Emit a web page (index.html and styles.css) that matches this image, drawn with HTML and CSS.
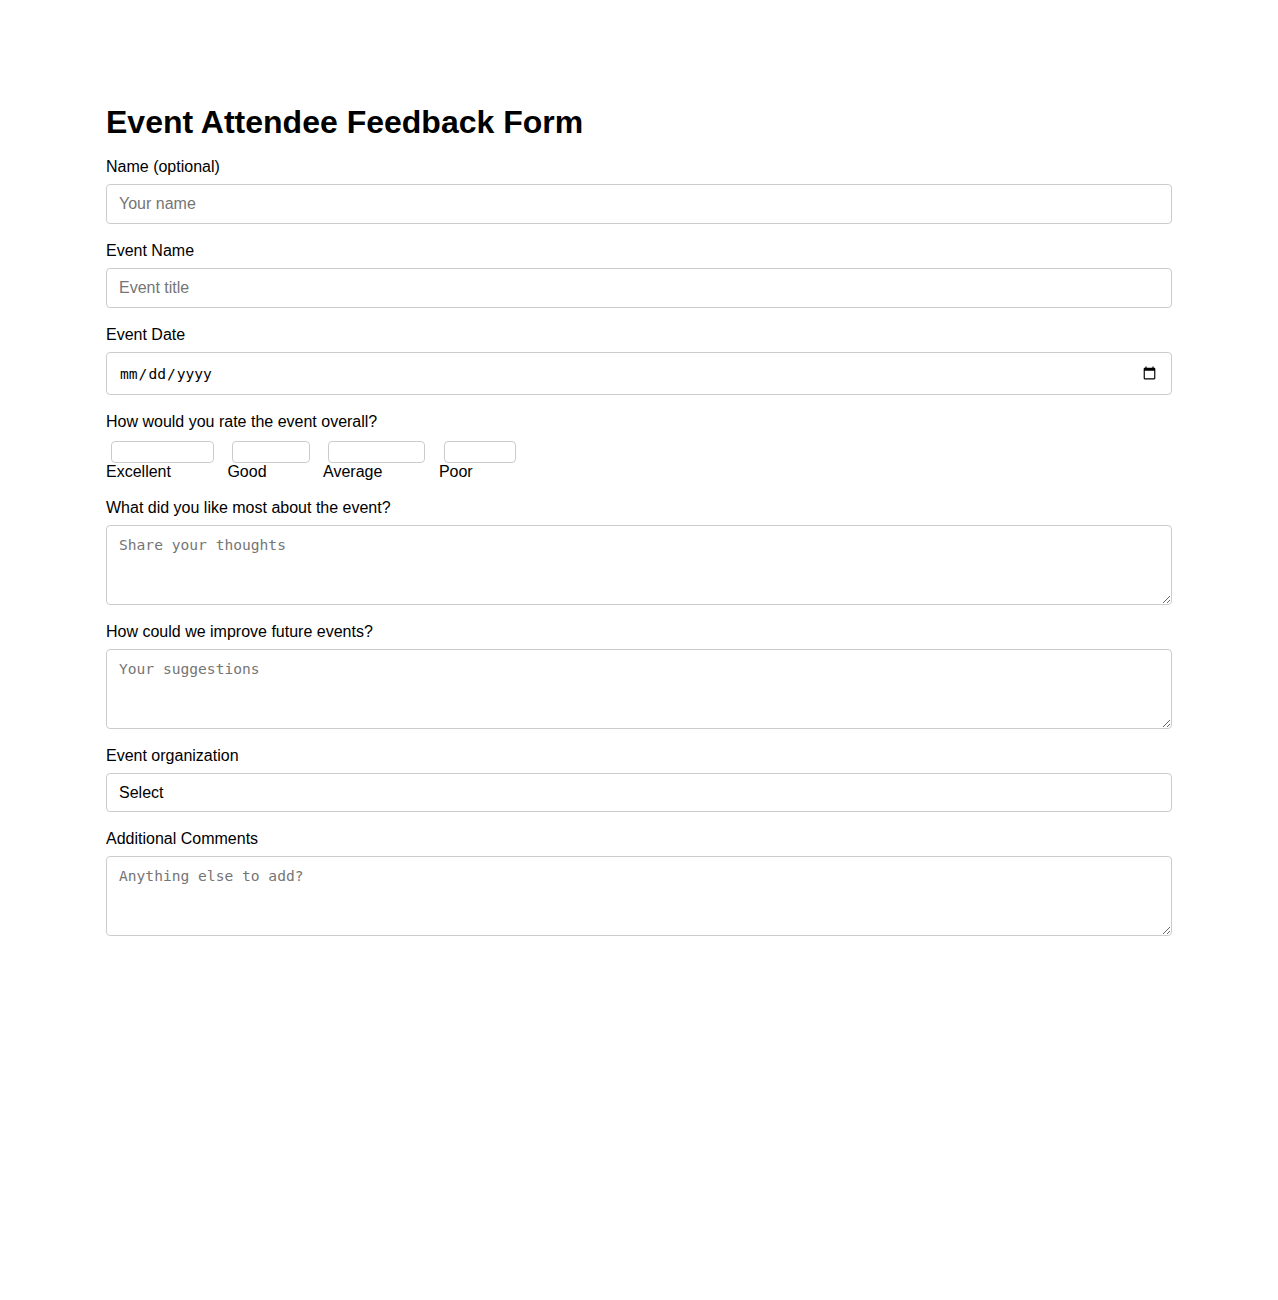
FILE: index.html
```html
<!DOCTYPE html>
<html lang="en">
<head>
  <meta charset="UTF-8" />
  <meta name="viewport" content="width=device-width, initial-scale=1.0"/>
  <title>Event Attendee Feedback Form</title>
  <link rel="stylesheet" href="styles.css">
</head>
<body>
  <div id="feedback-form">
    <h1>Event Attendee Feedback Form</h1>

    <form>
      <div class="field">
        <label for="attendee-name">Name (optional)</label>
        <input type="text" id="attendee-name" class="text-input" placeholder="Your name">
      </div>

      <div class="field">
        <label for="event-name">Event Name</label>
        <input type="text" id="event-name" class="text-input" placeholder="Event title">
      </div>

      <div class="field">
        <label for="event-date">Event Date</label>
        <input type="date" id="event-date" class="date-input">
      </div>

      <!-- Overall rating -->
      <div class="field">
        <label>How would you rate the event overall?</label>
        <div class="rating">
          <label class="rating-option"><input type="radio" name="rating" value="excellent"><span>Excellent</span></label>
          <label class="rating-option"><input type="radio" name="rating" value="good"><span>Good</span></label>
          <label class="rating-option"><input type="radio" name="rating" value="average"><span>Average</span></label>
          <label class="rating-option"><input type="radio" name="rating" value="poor"><span>Poor</span></label>
        </div>
      </div>

      <div class="field">
        <label for="liked-most">What did you like most about the event?</label>
        <textarea id="liked-most" placeholder="Share your thoughts"></textarea>
      </div>

      <div class="field">
        <label for="improve">How could we improve future events?</label>
        <textarea id="improve" placeholder="Your suggestions"></textarea>
      </div>

      <div class="field">
        <label for="organization">Event organization</label>
        <select id="organization">
          <option>Select</option>
          <option>Very well organized</option>
          <option>Well organized</option>
          <option>Somewhat organized</option>
          <option>Poorly organized</option>
        </select>
      </div>

      <div class="field">
        <label for="comments">Additional Comments</label>
        <textarea id="comments" placeholder="Anything else to add?"></textarea>
      </div>
    </form>
  </div>
</body>
</html>
```

FILE: styles.css
```css
body {
  margin: 0;
  background: #fff;
}

/* Container */
#feedback-form {
  max-width: 1066px;
  margin: 0 auto;
  padding-top: 104px;
  font-family: "Liberation Sans", Arial, sans-serif;
  font-size: 16px;
  color: #000;
}

/* Heading */
#feedback-form h1 {
  font-size: 32px;
  font-weight: bold;
  margin: 0 0 17px;
}

/* Field groups */
#feedback-form .field {
  margin-bottom: 18px;
}
#feedback-form .field > label {
  display: block;
  margin-bottom: 8px;
}

/* Text, date, select, textarea */
#feedback-form .text-input,
#feedback-form .date-input,
#feedback-form select,
#feedback-form textarea {
  display: block;
  width: 100%;
  box-sizing: border-box;
  margin: 0;
  padding: 10px 12px;
  border: 1px solid #ccc;
  border-radius: 4px;
  background-color: #fff;
  color: #000;
}

#feedback-form .text-input,
#feedback-form select {
  font-family: "Liberation Sans", Arial, sans-serif;
  font-size: 16px;
  height: 40px;
}

#feedback-form select {
  appearance: none;
  -webkit-appearance: none;
  height: 39px;
}

#feedback-form .date-input {
  font-family: "DejaVu Sans Mono", "Liberation Mono", monospace;
  font-size: 14.6px;
  height: 43px;
}

#feedback-form textarea {
  font-family: "DejaVu Sans Mono", "Liberation Mono", monospace;
  font-size: 14.6px;
  height: 80px;
  resize: vertical;
}

/* Rating options */
#feedback-form .rating {
  display: flex;
  gap: 10.5px;
}
#feedback-form .rating-option {
  display: grid;
  grid-template-columns: auto 46px;
}
#feedback-form .rating-option input {
  grid-column: 1 / -1;
  appearance: none;
  -webkit-appearance: none;
  width: calc(100% - 8px);
  height: 22px;
  box-sizing: border-box;
  margin: 2px 3px 0 5px;
  padding: 10px;
  border: 1px solid #ccc;
  border-radius: 4px;
  background: #fff;
}
#feedback-form .rating-option span {
  grid-column: 1;
}
```
